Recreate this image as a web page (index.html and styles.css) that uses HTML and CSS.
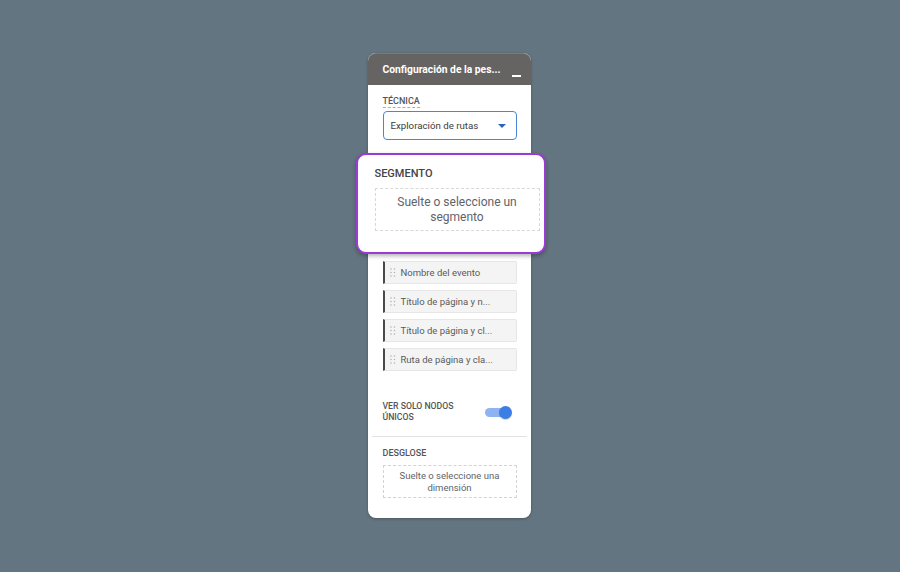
FILE: index.html
```html
<!DOCTYPE html>
<html lang="es">
<head>
<meta charset="utf-8">
<title>Configuración de la pestaña</title>
<link rel="stylesheet" href="styles.css">
</head>
<body>
<div class="panel">
  <div class="panel-header">
    <span class="panel-title">Configuración de la pes...</span>
    <span class="minimize"></span>
  </div>
  <div class="panel-body">
    <div class="field-label"><span class="dashed">TÉCNICA</span></div>
    <div class="select">
      <span>Exploración de rutas</span>
      <span class="caret"></span>
    </div>
    <div class="spacer"></div>
    <ul class="step-list">
      <li class="step"><svg class="handle" width="6" height="9" viewBox="0 0 6 9"><g fill="#b4b4b4"><circle cx="1" cy="1" r="0.8"/><circle cx="4.5" cy="1" r="0.8"/><circle cx="1" cy="4.5" r="0.8"/><circle cx="4.5" cy="4.5" r="0.8"/><circle cx="1" cy="8" r="0.8"/><circle cx="4.5" cy="8" r="0.8"/></g></svg><span>Nombre del evento</span></li>
      <li class="step"><svg class="handle" width="6" height="9" viewBox="0 0 6 9"><g fill="#b4b4b4"><circle cx="1" cy="1" r="0.8"/><circle cx="4.5" cy="1" r="0.8"/><circle cx="1" cy="4.5" r="0.8"/><circle cx="4.5" cy="4.5" r="0.8"/><circle cx="1" cy="8" r="0.8"/><circle cx="4.5" cy="8" r="0.8"/></g></svg><span>Título de página y n...</span></li>
      <li class="step"><svg class="handle" width="6" height="9" viewBox="0 0 6 9"><g fill="#b4b4b4"><circle cx="1" cy="1" r="0.8"/><circle cx="4.5" cy="1" r="0.8"/><circle cx="1" cy="4.5" r="0.8"/><circle cx="4.5" cy="4.5" r="0.8"/><circle cx="1" cy="8" r="0.8"/><circle cx="4.5" cy="8" r="0.8"/></g></svg><span>Título de página y cl...</span></li>
      <li class="step"><svg class="handle" width="6" height="9" viewBox="0 0 6 9"><g fill="#b4b4b4"><circle cx="1" cy="1" r="0.8"/><circle cx="4.5" cy="1" r="0.8"/><circle cx="1" cy="4.5" r="0.8"/><circle cx="4.5" cy="4.5" r="0.8"/><circle cx="1" cy="8" r="0.8"/><circle cx="4.5" cy="8" r="0.8"/></g></svg><span>Ruta de página y cla...</span></li>
    </ul>
    <div class="toggle-row">
      <div class="toggle-label">VER SOLO NODOS<br>ÚNICOS</div>
      <div class="toggle"><span class="track"></span><span class="thumb"></span></div>
    </div>
    <div class="divider"></div>
    <div class="section-label">DESGLOSE</div>
    <div class="drop-box small">Suelte o seleccione una<br>dimensión</div>
  </div>

  <div class="segment-card">
    <div class="segment-title">SEGMENTO</div>
    <div class="drop-box large">Suelte o seleccione un<br>segmento</div>
  </div>
</div>
</body>
</html>
```

FILE: styles.css
```css
* { box-sizing: border-box; }

html, body {
  margin: 0;
  padding: 0;
}

body {
  background: #637580;
  height: 572px;
  overflow: hidden;
  font-family: Roboto, "Liberation Sans", Arial, sans-serif;
  padding-top: 53px;
}

.panel {
  position: relative;
  width: 163px;
  margin: 0 auto;
  left: -1px;
  background: #ffffff;
  border-radius: 8px;
  box-shadow: 0 1px 3px rgba(0, 0, 0, 0.25);
}

.panel-header {
  height: 32px;
  background: #666462;
  border-top: 1px solid #7c7a78;
  border-radius: 8px 8px 0 0;
  display: flex;
  align-items: center;
  justify-content: space-between;
  padding: 0 10px 0 15px;
}

.panel-title {
  color: #ffffff;
  font-weight: 700;
  font-size: 10.3px;
  white-space: nowrap;
}

.minimize {
  width: 9px;
  height: 2px;
  background: #ffffff;
  margin-top: 12px;
}

.panel-body {
  padding: 0 14px 20px 15px;
}

.field-label {
  margin-top: 8px;
  height: 12px;
  line-height: 11px;
}

.dashed {
  display: inline-block;
  font-size: 9px;
  font-weight: 500;
  color: #555555;
  line-height: 11px;
  border-bottom: 1px dashed #a8adb2;
}

.select {
  margin-top: 6px;
  height: 29px;
  border: 1.5px solid #4a86d6;
  border-radius: 4px;
  display: flex;
  align-items: center;
  justify-content: space-between;
  padding: 0 10px 0 7px;
  font-size: 9.7px;
  color: #3c3c3c;
}

.caret {
  width: 0;
  height: 0;
  border-left: 4px solid transparent;
  border-right: 4px solid transparent;
  border-top: 4px solid #2a63b8;
  margin-top: 1px;
}

.spacer {
  height: 121px;
}

.step-list {
  list-style: none;
  margin: 0;
  padding: 0;
  display: flex;
  flex-direction: column;
  gap: 6px;
}

.step {
  height: 23px;
  background: #f4f4f4;
  border: 1px solid #e6e6e6;
  border-left: 2px solid #4a4a4a;
  border-radius: 0 2px 2px 0;
  display: flex;
  align-items: center;
  padding-left: 5px;
  font-size: 9.5px;
  color: #5a5a5a;
  white-space: nowrap;
}

.handle {
  margin-right: 5px;
  flex: none;
}

.toggle-row {
  margin-top: 30px;
  display: flex;
  align-items: center;
  justify-content: space-between;
}

.toggle-label {
  font-size: 8.7px;
  font-weight: 500;
  line-height: 11px;
  color: #555555;
}

.toggle {
  position: relative;
  width: 27px;
  height: 13px;
  margin-right: 5px;
}

.track {
  position: absolute;
  left: 0;
  top: 2px;
  width: 22px;
  height: 9px;
  border-radius: 5px;
  background: #8db3f2;
}

.thumb {
  position: absolute;
  right: 0;
  top: 0;
  width: 13px;
  height: 13px;
  border-radius: 50%;
  background: #3b7ee6;
  box-shadow: 0 1px 1px rgba(0, 0, 0, 0.2);
}

.divider {
  margin: 13px -10px 0 -11px;
  height: 1px;
  background: #e2e2e2;
}

.section-label {
  margin-top: 11px;
  font-size: 9px;
  font-weight: 500;
  line-height: 11px;
  color: #555555;
}

.drop-box {
  border: 1px dashed #d3d3d3;
  display: flex;
  align-items: center;
  justify-content: center;
  text-align: center;
  color: #5f6368;
}

.drop-box.small {
  margin-top: 6px;
  height: 33px;
  font-size: 9.5px;
  line-height: 12px;
}

.segment-card {
  position: absolute;
  left: -12px;
  top: 100px;
  width: 190px;
  height: 101px;
  background: #ffffff;
  border: 2px solid #9c3ad6;
  border-radius: 10px;
  box-shadow: 0 2px 4px rgba(0, 0, 0, 0.3);
  padding: 12px 4px 0 17px;
}

.segment-title {
  font-size: 11px;
  font-weight: 500;
  line-height: 13px;
  color: #444444;
}

.drop-box.large {
  margin-top: 8px;
  height: 43px;
  font-size: 12px;
  line-height: 15px;
  border-color: #d8d8d8;
}
```
